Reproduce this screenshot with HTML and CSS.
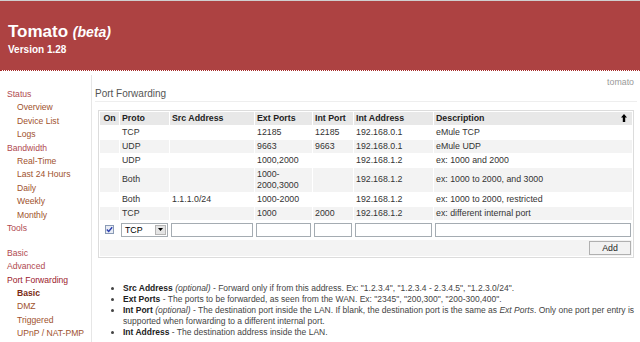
FILE: index.html
```html
<!DOCTYPE html>
<html>
<head>
<meta charset="utf-8">
<title>Tomato - Port Forwarding</title>
<link rel="stylesheet" href="styles.css">
</head>
<body>
<div class="header">
  <div class="title">Tomato <i>(beta)</i></div>
  <div class="version">Version 1.28</div>
</div>
<div class="main">
  <nav class="navi">
    <a class="top">Status</a>
    <a class="sub">Overview</a>
    <a class="sub">Device List</a>
    <a class="sub">Logs</a>
    <a class="top">Bandwidth</a>
    <a class="sub">Real-Time</a>
    <a class="sub">Last 24 Hours</a>
    <a class="sub">Daily</a>
    <a class="sub">Weekly</a>
    <a class="sub">Monthly</a>
    <a class="top">Tools</a>
    <div class="navgap"></div>
    <a class="top">Basic</a>
    <a class="top">Advanced</a>
    <a class="top active">Port Forwarding</a>
    <a class="sub active">Basic</a>
    <a class="sub">DMZ</a>
    <a class="sub">Triggered</a>
    <a class="sub">UPnP / NAT-PMP</a>
  </nav>
  <div class="content">
    <div class="ident">tomato</div>
    <div class="section-title">Port Forwarding</div>
    <div class="section">
      <table class="grid">
        <colgroup>
          <col class="c-on"><col class="c-proto"><col class="c-src"><col class="c-ext"><col class="c-int"><col class="c-addr"><col>
        </colgroup>
        <thead>
          <tr class="head">
            <th class="on">On</th><th>Proto</th><th>Src Address</th><th>Ext Ports</th><th>Int Port</th><th>Int Address</th>
            <th><div class="desc-head"><span>Description</span><svg class="sort" width="6" height="8" viewBox="0 0 6 8"><path d="M3 0 L6 3.5 H4.2 V8 H1.8 V3.5 H0 Z" fill="#000"/></svg></div></th>
          </tr>
        </thead>
        <tbody>
          <tr class="odd"><td></td><td>TCP</td><td></td><td>12185</td><td>12185</td><td>192.168.0.1</td><td>eMule TCP</td></tr>
          <tr class="even"><td></td><td>UDP</td><td></td><td>9663</td><td>9663</td><td>192.168.0.1</td><td>eMule UDP</td></tr>
          <tr class="odd"><td></td><td>UDP</td><td></td><td>1000,2000</td><td></td><td>192.168.1.2</td><td>ex: 1000 and 2000</td></tr>
          <tr class="even"><td></td><td>Both</td><td></td><td>1000-<br>2000,3000</td><td></td><td>192.168.1.2</td><td>ex: 1000 to 2000, and 3000</td></tr>
          <tr class="odd"><td></td><td>Both</td><td>1.1.1.0/24</td><td>1000-2000</td><td></td><td>192.168.1.2</td><td>ex: 1000 to 2000, restricted</td></tr>
          <tr class="even"><td></td><td>TCP</td><td></td><td>1000</td><td>2000</td><td>192.168.1.2</td><td>ex: different internal port</td></tr>
          <tr class="edit">
            <td class="on"><span class="cbx"><svg width="7" height="7" viewBox="0 0 7 7"><path d="M0.8 3.4 L2.7 5.4 L6.2 1.2" fill="none" stroke="#2a3fb0" stroke-width="1.4"/></svg></span></td>
            <td><div class="select"><span class="sel-val">TCP</span><span class="sel-btn"><svg width="5" height="3" viewBox="0 0 5 3"><path d="M0 0 H5 L2.5 3 Z" fill="#000"/></svg></span></div></td>
            <td><div class="field"></div></td>
            <td><div class="field"></div></td>
            <td><div class="field"></div></td>
            <td><div class="field"></div></td>
            <td><div class="field"></div></td>
          </tr>
          <tr class="even controls"><td colspan="7"><button class="btn" type="button">Add</button></td></tr>
        </tbody>
      </table>
    </div>
    <ul class="notes">
      <li><b>Src Address</b> <i>(optional)</i> - Forward only if from this address. Ex: "1.2.3.4", "1.2.3.4 - 2.3.4.5", "1.2.3.0/24".</li>
      <li><b>Ext Ports</b> - The ports to be forwarded, as seen from the WAN. Ex: "2345", "200,300", "200-300,400".</li>
      <li><b>Int Port</b> <i>(optional)</i> - The destination port inside the LAN. If blank, the destination port is the same as <i>Ext Ports</i>. Only one port per entry is supported when forwarding to a different internal port.</li>
      <li><b>Int Address</b> - The destination address inside the LAN.</li>
    </ul>
  </div>
</div>
</body>
</html>
```
FILE: styles.css
```css
html, body {
  margin: 0;
  padding: 0;
  background: #fff;
}
body {
  font-family: "Liberation Sans", Arial, sans-serif;
  font-size: 8.8px;
  color: #333;
}
.header {
  height: 69px;
  border-top: 1px solid #cfcfcf;
  border-bottom: 1px dotted #a82a2a;
  background: #ad4242;
  background-clip: padding-box;
  color: #fff;
  padding-left: 8px;
}
.title {
  font-size: 17px;
  font-weight: bold;
  line-height: 20px;
  margin-top: 21px;
}
.title i {
  font-size: 14px;
}
.version {
  font-size: 10px;
  font-weight: bold;
  line-height: 12px;
  margin-top: 2px;
}
.main {
  display: flex;
  margin-top: 4px;
}
.navi {
  width: 92px;
  flex: none;
  box-sizing: border-box;
  border-right: 1px solid #e6e6e6;
  padding: 13px 0 0 7px;
  font-size: 8.6px;
  line-height: 13.4px;
  min-height: 267px;
}
.navi a {
  display: block;
  white-space: nowrap;
}
.navi a.top { color: #b04a50; }
.navi a.sub { color: #a0522d; padding-left: 10px; }
.navi a.top.active { color: #9c1a2c; }
.navi a.sub.active { color: #7a2a14; font-weight: bold; }
.navgap { height: 11.3px; }
.content {
  flex: 1;
  min-width: 0;
  padding: 0 3px;
}
.ident {
  text-align: right;
  color: #999;
  line-height: 11px;
  padding: 1.5px 3px 0 0;
}
.section-title {
  font-size: 10px;
  line-height: 12px;
  color: #555;
  padding-bottom: 1px;
  border-bottom: 1px solid #eee;
}
.section {
  padding: 8px 3px 0 3px;
}
.grid {
  width: 100%;
  table-layout: fixed;
  border: 1px solid #dcdcdc;
  border-spacing: 1px;
  line-height: 11px;
}
.c-on { width: 19px; }
.c-proto { width: 49px; }
.c-src { width: 84px; }
.c-ext { width: 57px; }
.c-int { width: 40px; }
.c-addr { width: 79px; }
.grid th, .grid td {
  padding: 1px 2px;
  text-align: left;
  vertical-align: middle;
  white-space: nowrap;
}
.grid th {
  background: #e8e8e8;
  color: #222;
  font-weight: bold;
}
.grid th.on, .grid td.on {
  text-align: center;
  padding: 1px 0;
}
.desc-head {
  display: flex;
  align-items: center;
  justify-content: space-between;
  padding-right: 3px;
}
.sort { display: block; }
.grid tr.odd td { background: #fff; }
.grid tr.even td { background: #f3f3f3; }
.grid tr.edit td { padding: 2px 1px; }
.grid tr.edit td.on { padding: 2px 0; }
.cbx {
  display: inline-flex;
  align-items: center;
  justify-content: center;
  width: 9px;
  height: 9px;
  box-sizing: border-box;
  border: 1px solid #8a9bb5;
  background: #e8ecf4;
  vertical-align: middle;
}
.cbx svg { display: block; }
.select {
  display: flex;
  height: 14px;
  box-sizing: border-box;
  border: 1px solid #a5acb2;
  background: #fff;
  align-items: stretch;
}
.sel-val {
  flex: 1;
  padding-left: 3px;
  line-height: 12px;
  color: #000;
}
.sel-btn {
  width: 11px;
  margin: 1px;
  box-sizing: border-box;
  background: #e4e4e4;
  border: 1px solid #b4b4b4;
  display: flex;
  align-items: center;
  justify-content: center;
}
.sel-btn svg { display: block; }
.field {
  height: 14px;
  box-sizing: border-box;
  border: 1px solid #a5acb2;
  background: #fff;
}
.grid tr.controls td {
  text-align: right;
  padding: 1px 1px;
}
.btn {
  font-family: inherit;
  font-size: 8.8px;
  color: #222;
  width: 42px;
  height: 14px;
  padding: 0;
  line-height: 12px;
  border: 1px solid #b0b0b0;
  background: #f2f2f2;
  display: block;
  margin-left: auto;
}
.notes {
  margin: 25px 0 0 0;
  padding: 0 0 0 28px;
  font-size: 8.5px;
  line-height: 11px;
  color: #444;
}
.notes b { color: #222; }
```
